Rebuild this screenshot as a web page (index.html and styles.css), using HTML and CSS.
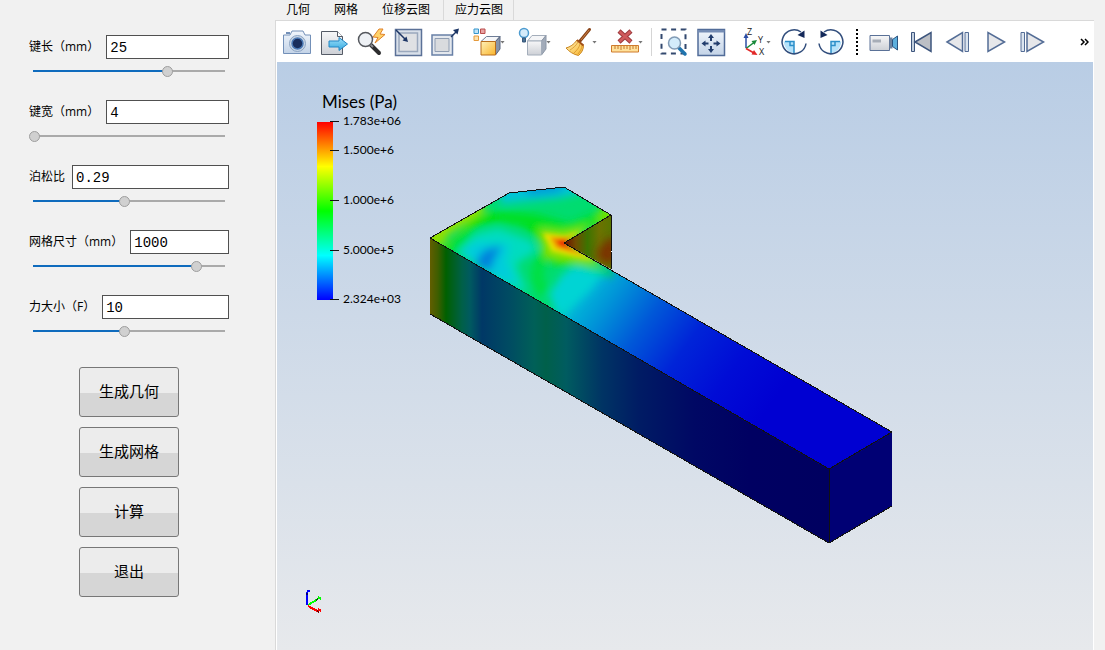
FILE: index.html
```html
<!DOCTYPE html>
<html lang="zh-CN">
<head>
<meta charset="utf-8">
<title>应力云图</title>
<link rel="stylesheet" href="styles.css">
</head>
<body>
<form class="panel">
  <div class="field">
    <div class="row"><label for="len">键长（mm）</label><input id="len" class="box" type="text" value="25"></div>
    <input class="slider" type="range" aria-label="键长" min="0" max="1000" value="704" style="--fill:70.4%">
  </div>
  <div class="field">
    <div class="row"><label for="wid">键宽（mm）</label><input id="wid" class="box" type="text" value="4"></div>
    <input class="slider" type="range" aria-label="键宽" min="0" max="1000" value="0" style="--fill:0%">
  </div>
  <div class="field">
    <div class="row"><label for="poi">泊松比</label><input id="poi" class="box" type="text" value="0.29"></div>
    <input class="slider" type="range" aria-label="泊松比" min="0" max="1000" value="476" style="--fill:47.6%">
  </div>
  <div class="field">
    <div class="row"><label for="mesh">网格尺寸（mm）</label><input id="mesh" class="box" type="text" value="1000"></div>
    <input class="slider" type="range" aria-label="网格尺寸" min="0" max="1000" value="857" style="--fill:85.7%">
  </div>
  <div class="field">
    <div class="row"><label for="force">力大小（F）</label><input id="force" class="box" type="text" value="10"></div>
    <input class="slider" type="range" aria-label="力大小" min="0" max="1000" value="476" style="--fill:47.6%">
  </div>
  <div class="actions">
    <button type="button" class="action">生成几何</button>
    <button type="button" class="action">生成网格</button>
    <button type="button" class="action">计算</button>
    <button type="button" class="action">退出</button>
  </div>
</form>

<main class="main">
  <nav class="tabs">
    <button class="tab">几何</button><button class="tab">网格</button><button class="tab">位移云图</button><button class="tab tab-active">应力云图</button>
  </nav>
  <div class="view">
    <div class="toolbar">
      <button class="tool" aria-label="截图"><svg viewBox="0 0 28 28">
        <path d="M1 7h6l2-4h11l2 4h5.500v18.500H.5V7z" fill="url(#gPale)" stroke="#7390b8"/><path d="M3 5h4" stroke="#7390b8" stroke-width="2"/>
        <circle cx="14.500" cy="15.500" r="8" fill="#c8d6e6" stroke="#8ba3c2"/><circle cx="14.500" cy="15.500" r="5.500" fill="#182d5c" stroke="#4a78b4" stroke-width="1.500"/></svg></button>
      <button class="tool" aria-label="导出"><svg viewBox="0 0 28 28">
        <path d="M1.500 3.500h16l5 5v18h-21z" fill="url(#gGrey)" stroke="#555b66"/><path d="M17.500 3.500v5h5" fill="#fff" stroke="#555b66"/>
        <path d="M9 13h10V9.500l8.500 6.500-8.500 6.500V19H9z" fill="url(#gBlue)" stroke="#2386c4"/></svg></button>
      <button class="tool" aria-label="快速缩放"><svg viewBox="0 0 28 28">
        <path d="M14 17l8 8" stroke="#2d2d2f" stroke-width="4" stroke-linecap="round"/><path d="M13 16l3 3" stroke="#8b8b90" stroke-width="2"/>
        <circle cx="8.500" cy="11.500" r="7" fill="#eef1f5" stroke="#55585e" stroke-width="1.500"/>
        <path d="M22 1l-6 8 5 .5L18 15l10-8.500-5-.5 3-5z" fill="#ffd36a" stroke="#e0822a"/></svg></button>
      <button class="tool" aria-label="缩小视图"><svg viewBox="0 0 28 28">
        <path d="M1.500 1.500h26v26h-26z" fill="#d9e0ea" stroke="#5b7197" stroke-width="1.500"/><path d="M5 5h18.500v18.500H5z" fill="#dfe1e4" stroke="#9aa8bd" stroke-width="1.500"/>
        <path d="M2 2l10 10" stroke="#1c3565" stroke-width="1.500"/><path d="M14 14l-5.500-1.500L12.500 8.500z" fill="#1c3565"/></svg></button>
      <button class="tool" aria-label="放大视图"><svg viewBox="0 0 28 28">
        <path d="M1 7h20.500v20H1z" fill="#e4e8ee" stroke="#6880a6" stroke-width="1.500"/><path d="M4 10.500h14v13H4z" fill="#d9dbde" stroke="#8f9db2"/>
        <path d="M20 9l6-6" stroke="#1c3565" stroke-width="1.500"/><path d="M28 .5l-1.500 6-4.500-4.500z" fill="#1c3565"/></svg></button>
      <button class="tool drop" aria-label="选择"><svg viewBox="0 0 28 28">
        <path d="M2 1h4.500v4.500H2z" fill="#bfe3f8" stroke="#3595cb"/><path d="M8.500 1H13v4.500H8.500z" fill="#e8a3a3" stroke="#b94c4c"/><path d="M2 8h4.500v4.500H2z" fill="#ffe3ae" stroke="#e59a3c"/>
        <path d="M9 13.500L14.500 8.500H28l-4.500 5z" fill="#f5f6f8" stroke="#6e7d96"/><path d="M23.500 13.500l4.500-5v12.500L23.500 27z" fill="#8794a8" stroke="#5a6780"/><path d="M9 13.500h14.500V27H9z" fill="url(#gGold)" stroke="#b86d1c"/></svg><i class="arrow"></i></button>
      <button class="tool drop" aria-label="显示"><svg viewBox="0 0 28 28">
        <path d="M9.500 13l4.500-5.500h14L23.500 13z" fill="#f4f5f7" stroke="#a4aebb"/><path d="M23.500 13l4.500-5.500v13.500L23.500 27z" fill="#a2abb9" stroke="#8b96a6"/><path d="M9.500 13h14v14h-14z" fill="url(#gGrey)" stroke="#a4aebb"/>
        <circle cx="6" cy="5" r="4.500" fill="#d5ebfa" stroke="#4c9bd0" stroke-width="1.500"/><path d="M4.500 10h3v4h-3z" fill="#4b7194" stroke="#39597b"/></svg><i class="arrow"></i></button>
      <button class="tool drop" aria-label="清除"><svg viewBox="0 0 28 28">
        <path d="M25.500 1.500L16 13" stroke="#8a4419" stroke-width="3" stroke-linecap="round"/><path d="M25 2l-8 10" stroke="#c98144"/>
        <path d="M13 12l6.500 5.500c0 4-2 7.500-5 10C9.500 26.500 5 23.500 2 20c4-1 8-3.500 11-8z" fill="url(#gGold)" stroke="#c98722"/><path d="M14 14c-2 4-5 6-8 8m10-6c-1 4-3 6-6 9m8-8c0 4-2 6-4 9" fill="none" stroke="#d08c22" stroke-width=".7"/><path d="M13 12l6.500 5.500" stroke="#a25018" stroke-width="2"/></svg><i class="arrow"></i></button>
      <button class="tool drop" aria-label="删除测量"><svg viewBox="0 0 28 28">
        <path d="M9 3l12 11M21 3L9 14" stroke="#9c3a3d" stroke-width="4.500"/><path d="M9.500 3.500l11 10M20.500 3.500l-11 10" stroke="#cf5a5c" stroke-width="2.500"/>
        <path d="M1.500 17.500h27v6.500h-27z" fill="#ffe19a" stroke="#cf7b2d"/><path d="M5 18v3m3-3v3m3-3v4m3-4v3m3-3v3m3-3v4m3-4v3m3-3v3" stroke="#c4792f"/></svg><i class="arrow"></i></button>
      <span class="sep"></span>
      <button class="tool" aria-label="框选缩放"><svg viewBox="0 0 28 28">
        <path d="M1.500 1.500h24v24h-24z" fill="none" stroke="#33496f" stroke-width="2" stroke-dasharray="5 4.600"/><path d="M18 19l7 7" stroke="#1f73ad" stroke-width="3.500" stroke-linecap="round"/>
        <circle cx="14.500" cy="15" r="6" fill="#d3ecfb" stroke="#829bb5" stroke-width="1.500"/></svg></button>
      <button class="tool" aria-label="适应窗口"><svg viewBox="0 0 28 28">
        <path d="M1 1.500h26.500v26H1z" fill="url(#gPale)" stroke="#526c99" stroke-width="1.500"/><path d="M1 2h26.500v2.500H1z" fill="#748cb4"/>
        <path d="M14 9v4m0 5v4M7 15.500h4.500m5 0H21" stroke="#223d6d" stroke-width="2"/><path d="M14 6l3 4h-6zM14 25l3-4h-6zM4.500 15.500l4-3v6zM23.500 15.500l-4-3v6z" fill="#223d6d"/></svg></button>
      <button class="tool drop" aria-label="坐标轴"><svg viewBox="0 0 28 28">
        <path d="M8 20V8" stroke="#2b4da5" stroke-width="1.500"/><path d="M8 5l2.500 5h-5z" fill="#2b4da5"/><path d="M8 20.500l8-6" stroke="#198a3a" stroke-width="1.500"/><path d="M19 12l-2.500 5-3-4z" fill="#198a3a"/><path d="M8 20.500l8 4.500" stroke="#e22727" stroke-width="1.500"/><path d="M19.500 27l-6-.5 2.500-4.500z" fill="#e22727"/>
        <text class="axis" x="9" y="7">Z</text><text class="axis" x="20" y="15">Y</text><text class="axis" x="21" y="27">X</text></svg><i class="arrow"></i></button>
      <button class="tool" aria-label="顺时针旋转"><svg viewBox="0 0 28 28">
        <path d="M14 13.500v11.500C9 25 5 21 3.500 13.500z" fill="#b5e2fa"/><path d="M14 25V13.500H5M14 17.500h-4v-4" fill="none" stroke="#2c8fc9" stroke-width="1.500"/>
        <path d="M21 4A12 12 0 1 0 26 15.500" fill="none" stroke="#314d7c" stroke-width="1.500"/><path d="M24.500 2.500v7.500l-7-3z" fill="#14295a"/></svg></button>
      <button class="tool" aria-label="逆时针旋转"><svg viewBox="0 0 28 28">
        <path d="M14 13.500v11.500C19 25 23 21 24.500 13.500z" fill="#b5e2fa"/><path d="M14 25V13.500h9M14 17.500h4v-4" fill="none" stroke="#2c8fc9" stroke-width="1.500"/>
        <path d="M7 4A12 12 0 1 1 2 15.500" fill="none" stroke="#314d7c" stroke-width="1.500"/><path d="M3.500 2.500v7.500l7-3z" fill="#14295a"/></svg></button>
      <span class="dots"></span>
      <button class="tool" aria-label="录制"><svg viewBox="0 0 28 28">
        <path d="M1 7.500h19.500v15H1z" fill="url(#gGrey)" stroke="#5a7197"/><path d="M3.500 11.500H12v3H3.500z" fill="#a7adb7"/><path d="M20.500 9.500h3v11h-3z" fill="#6d829f"/><path d="M23.500 11.500l5-3.500v14l-5-3.500z" fill="#5dafdd" stroke="#2a5380"/></svg></button>
      <button class="tool" aria-label="首帧"><svg viewBox="0 0 28 28"><path d="M5.500 4.500h3v19h-3z" fill="#c3d0df" stroke="#3d557d"/><path d="M9 14l16-9.500v19z" fill="#bcbfc5" stroke="#3d557d" stroke-width="1.500"/></svg></button>
      <button class="tool" aria-label="上一帧"><svg viewBox="0 0 28 28"><path d="M4 14l15.500-9.500v19z" fill="#e6e7ea" stroke="#546d96" stroke-width="1.500"/><path d="M22 4.500h3.500v19H22z" fill="#dce5ef" stroke="#546d96"/></svg></button>
      <button class="tool" aria-label="播放"><svg viewBox="0 0 28 28"><path d="M24.500 14L8 4.500v19z" fill="#e6e7ea" stroke="#546d96" stroke-width="1.500"/></svg></button>
      <button class="tool" aria-label="下一帧"><svg viewBox="0 0 28 28"><path d="M4 4.500h3.500v19H4z" fill="#dce5ef" stroke="#546d96"/><path d="M26.500 14L10 4.500v19z" fill="#e6e7ea" stroke="#546d96" stroke-width="1.500"/></svg></button>
      <button class="more" aria-label="更多"><svg viewBox="0 0 9 8"><path d="M1 1l3 3-3 3M5 1l3 3-3 3" fill="none" stroke="#000" stroke-width="1.500"/></svg></button>
    </div>

    <svg class="scene" viewBox="277 62 816 588" preserveAspectRatio="xMinYMin meet" role="img" aria-label="Mises">
      <defs>
        <linearGradient id="gPale" x2="0" y2="1"><stop stop-color="#f1f6fc"/><stop offset="1" stop-color="#c3d3e7"/></linearGradient>
        <linearGradient id="gGrey" x2="0" y2="1"><stop stop-color="#f7f7f8"/><stop offset="1" stop-color="#cdd0d6"/></linearGradient>
        <linearGradient id="gBlue" x2="0" y2="1"><stop stop-color="#9fe0fa"/><stop offset="1" stop-color="#34a9df"/></linearGradient>
        <linearGradient id="gGold" x2="1" y2="1"><stop stop-color="#fff0b8"/><stop offset="1" stop-color="#f9b52c"/></linearGradient>
        <linearGradient id="scale" x2="0" y2="1">
          <stop stop-color="#f00"/><stop offset=".25" stop-color="#ff0"/><stop offset=".5" stop-color="#0f0"/><stop offset=".75" stop-color="#0ff"/><stop offset="1" stop-color="#00f"/>
        </linearGradient>
        <linearGradient id="top" gradientUnits="userSpaceOnUse" x1="550" y1="270" x2="760" y2="420">
          <stop stop-color="#00dccc"/><stop offset=".12" stop-color="#00c4d8"/><stop offset=".26" stop-color="#0094d8"/><stop offset=".42" stop-color="#0058d8"/><stop offset=".6" stop-color="#0024d8"/><stop offset=".8" stop-color="#000cd6"/><stop offset="1" stop-color="#0000d2"/>
        </linearGradient>
        <linearGradient id="front" gradientUnits="userSpaceOnUse" x1="430" y1="0" x2="830" y2="0">
          <stop stop-color="#625e00"/><stop offset=".02" stop-color="#3d5e00"/><stop offset=".04" stop-color="#006000"/><stop offset=".08" stop-color="#006048"/><stop offset=".1" stop-color="#005a60"/><stop offset=".13" stop-color="#003866"/><stop offset=".2" stop-color="#004c62"/><stop offset=".26" stop-color="#006058"/><stop offset=".29" stop-color="#00604a"/><stop offset=".34" stop-color="#005c60"/><stop offset=".43" stop-color="#003464"/><stop offset=".52" stop-color="#001c64"/><stop offset=".66" stop-color="#000864"/><stop offset=".8" stop-color="#000062"/><stop offset="1" stop-color="#000060"/>
        </linearGradient>
        <linearGradient id="wall" gradientUnits="userSpaceOnUse" x1="564" y1="0" x2="611" y2="0">
          <stop stop-color="#6c0c00"/><stop offset=".25" stop-color="#704c00"/><stop offset=".5" stop-color="#3c7400"/><stop offset=".75" stop-color="#6c7200"/><stop offset="1" stop-color="#587600"/>
        </linearGradient>
        <clipPath id="topClip"><path d="M430 238L509 193L564 187L611 215L564 243L892 432L829 469z"/></clipPath>
        <clipPath id="wallClip"><path d="M564 243L611 215V269z"/></clipPath>
        <filter id="b2" x="-50%" y="-50%" width="200%" height="200%"><feGaussianBlur stdDeviation="2"/></filter>
        <filter id="b4" x="-50%" y="-50%" width="200%" height="200%"><feGaussianBlur stdDeviation="4"/></filter>
        <filter id="b7" x="-50%" y="-50%" width="200%" height="200%"><feGaussianBlur stdDeviation="7"/></filter>
      </defs>

      <g clip-path="url(#topClip)">
        <path d="M420 180H900V480H420z" fill="url(#top)"/>
        <path d="M410 180H625V250L600 266L570 272L556 320L535 320L410 240z" fill="#00dc70" filter="url(#b7)"/>
        <g filter="url(#b4)" fill="none">
          <path d="M500 184L575 180L585 192L560 198L500 204z" fill="#00c4d8"/>
          <path d="M520 184L566 182L560 192L530 195z" fill="#0098d8"/>
          <path d="M456 252L475 234L498 228L530 240L538 250L516 264L528 294L500 285z" fill="#00dcc0"/>
          <path d="M462 250L478 242L510 244L506 262L516 284L490 275z" fill="#00ccdc"/>
          <path d="M474 264L484 250L502 245L494 260L490 272z" fill="#0080dc"/>
          <path d="M549 294L562 276L576 266L604 272L590 290L560 318z" fill="#00d4d4"/>
          <path d="M436 262L462 240L476 222L500 217L525 222L540 234L548 246L538 268" stroke="#00e000" stroke-width="9"/>
          <path d="M500 217L535 220L570 230L605 216" stroke="#00e020" stroke-width="12"/>
          <path d="M540 260L537 278L544 294" stroke="#00e040" stroke-width="12"/>
          <path d="M552 262L580 264L612 274" stroke="#00e000" stroke-width="5"/>
          <path d="M424 242L482 204" stroke="#9ae000" stroke-width="15"/>
          <path d="M426 247L445 237" stroke="#8ce000" stroke-width="12"/>
          <path d="M600 208L618 206L618 222L596 226z" fill="#70e000"/>
          <path d="M538 229L562 232L592 224L566 244L604 266L576 262L546 258z" fill="#90e000"/>
        </g>
        <g filter="url(#b2)">
          <path d="M543 233L565 236L584 229L564 243L598 262L576 257L552 251z" fill="#e6e000"/>
          <path d="M550 237L567 238L575 234L564 243L585 256L556 248z" fill="#f09000"/>
          <path d="M556 240L570 239L565 243L573 250L560 246z" fill="#ec2000"/>
        </g>
      </g>
      <path d="M430 238L829 469V543L430 314z" fill="url(#front)"/>
      <path d="M829 469L892 432V506L829 543z" fill="#000074"/>
      <g clip-path="url(#wallClip)">
        <path d="M560 210H612V270H560z" fill="url(#wall)"/>
        <path d="M596 254L606 240L616 236V262L604 264z" fill="#7c3000" filter="url(#b4)"/>
      </g>
      <path class="edge" d="M430 314L829 543L892 506M829 543V469L430 238L509 193L564 187L611 215V269M611 215L564 243L892 432L829 469"/>
      <path d="M611 251h1v1h-1z" fill="#fff"/>

      <text class="legend-title" x="322" y="108">Mises (Pa)</text>
      <path d="M317 122h16v178h-16z" fill="url(#scale)"/>
      <path class="edge" d="M330 121.500h9M330 150.500h9M330 200.500h9M330 250.500h9M330 299.500h9"/>
      <g class="legend"><text x="343" y="125">1.783e+06</text><text x="343" y="154">1.500e+6</text><text x="343" y="204">1.000e+6</text><text x="343" y="254">5.000e+5</text><text x="343" y="303">2.324e+03</text></g>

      <g fill="none" stroke-width="2" shape-rendering="crispEdges">
        <path d="M307 605V593l1-2h2" stroke="#00f"/><path d="M308 605l10-6M318 597l3 2" stroke="#0f0"/><path d="M308 606l11 6M318 609l3 2" stroke="#f00"/>
        <path d="M306 594h2" stroke="#000070"/><path d="M316 600l2-1" stroke="#006000"/><path d="M317 611l2 1" stroke="#700000"/>
      </g>
    </svg>
  </div>
</main>
</body>
</html>
```

FILE: styles.css
```css
* { box-sizing: border-box; }

body {
  margin: 0;
  min-height: 100vh;
  display: flex;
  background: #f1f1f1;
  color: #000;
  font: 12px/16px "Open Sans", "Noto Sans CJK SC", sans-serif;
}

button { font: inherit; color: inherit; border: 0; background: none; padding: 0; }

.panel {
  flex: 0 0 275px;
  min-width: 0;
  padding: 35px 46px 20px 29px;
}

.field { display: flex; flex-direction: column; gap: 4px; margin-bottom: 21px; }
.row { display: flex; align-items: center; gap: 7px; }
.row label { white-space: nowrap; }

.box {
  flex: 1;
  width: 0;
  min-width: 0;
  height: 24px;
  margin: 0;
  padding: 2px 3px 0;
  border: 1px solid #505050;
  background: #fff;
  font: 14px/20px "Liberation Mono", monospace;
}

.slider {
  appearance: none;
  width: 100%;
  height: 16px;
  margin: 0;
  background: linear-gradient(90deg, #0f6bbd var(--fill), #aaa var(--fill)) center / calc(100% - 8px) 2px no-repeat;
}
.slider::-webkit-slider-thumb {
  appearance: none;
  width: 11px;
  height: 11px;
  border: 1px solid #9e9e9e;
  border-radius: 50%;
  background: #d0d0d0;
}

.actions {
  display: flex;
  flex-direction: column;
  align-items: center;
  gap: 10px;
  margin-top: 28px;
}
.action {
  width: 100px;
  height: 50px;
  padding-bottom: 3px;
  border: 1px solid #777;
  border-radius: 3px;
  background: linear-gradient(#ececec 52%, #d6d6d6 52%);
  font: 15px/20px "Noto Sans CJK SC", sans-serif;
}

.main { flex: 1; min-width: 0; display: flex; flex-direction: column; }

.tabs { display: flex; height: 20px; }
.tab { padding: 0 13px 2px 11px; font-family: "Noto Sans CJK SC", sans-serif; white-space: nowrap; }
.tab-active { border: 1px solid #d9d9d9; border-width: 0 1px; padding-right: 10px; }

.view {
  flex: 1;
  display: flex;
  flex-direction: column;
  margin-right: 11px;
  border: 1px solid #d9d9d9;
  border-width: 1px 0 0 1px;
  padding: 0 1px;
  background: #fff;
}

.toolbar {
  display: flex;
  align-items: center;
  gap: 9px;
  padding: 7px 4px 6px 6px;
}
.tool { display: flex; align-items: center; flex: none; }
.tool svg { width: 28px; height: 28px; overflow: visible; }
.drop { margin-left: 4px; }
.arrow {
  width: 5px;
  height: 3px;
  background: #777;
  clip-path: polygon(0 0, 100% 0, 50% 100%);
}
.axis { font: 9px "Open Sans", sans-serif; fill: #222; }
.sep { width: 1px; height: 28px; margin: 0 -1px; background: #d5d5d5; }
.dots {
  width: 2px;
  height: 26px;
  margin: 0 2px;
  background: repeating-linear-gradient(#000 0 2px, transparent 2px 4px);
}
.more { margin-left: auto; display: flex; }
.more svg { width: 9px; height: 8px; }

.scene {
  flex: 1;
  display: block;
  width: 100%;
  background: linear-gradient(#b9cde5, #e7e9ec);
}
.edge { fill: none; stroke: #111; shape-rendering: crispEdges; }
.legend-title { font: 17px Lato, sans-serif; }
.legend { font: 12px Lato, sans-serif; }
```
